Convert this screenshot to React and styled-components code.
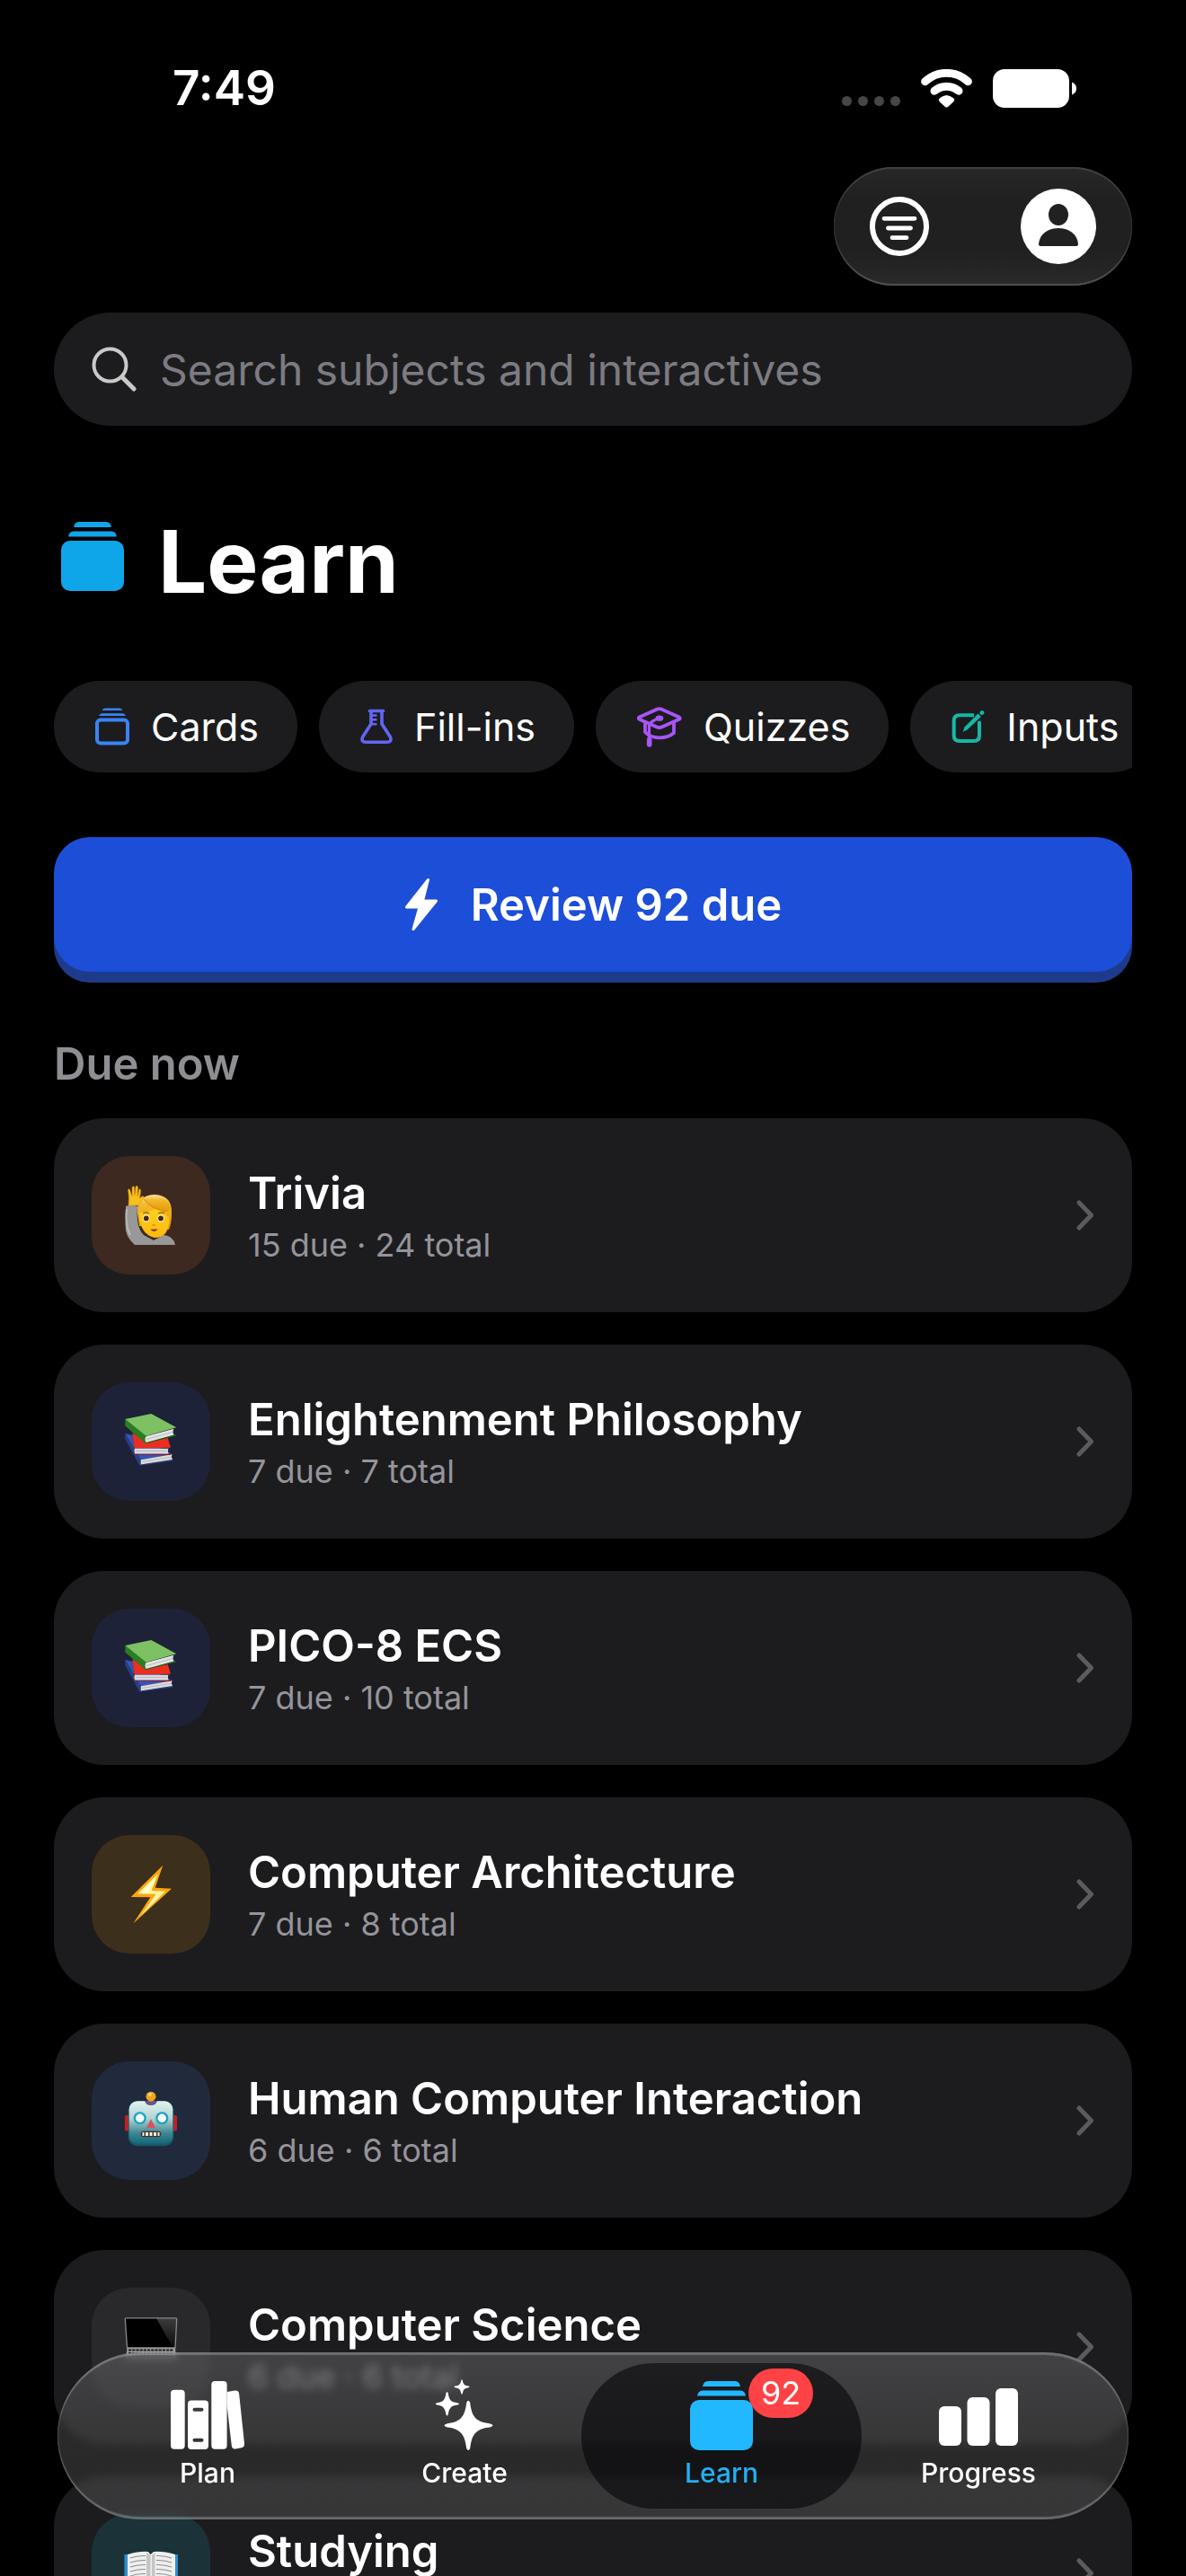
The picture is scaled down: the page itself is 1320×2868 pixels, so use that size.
import React, { useState } from "react";
import styled, { createGlobalStyle } from "styled-components";

const chips = [
  { name: "Cards", icon: <CardsOutlineIcon /> },
  { name: "Fill-ins", icon: <FlaskIcon /> },
  { name: "Quizzes", icon: <CapIcon /> },
  { name: "Inputs", icon: <EditIcon /> },
];

const decks = [
  { name: "Trivia", due: 15, total: 24, tint: "#3d291f", icon: <RaisedHand /> },
  { name: "Enlightenment Philosophy", due: 7, total: 7, tint: "#1e2239", icon: <Books /> },
  { name: "PICO-8 ECS", due: 7, total: 10, tint: "#1e2239", icon: <Books /> },
  { name: "Computer Architecture", due: 7, total: 8, tint: "#3c2f1b", icon: <Lightning /> },
  { name: "Human Computer Interaction", due: 6, total: 6, tint: "#202a3c", icon: <Robot /> },
  { name: "Computer Science", due: 6, total: 6, tint: "#29292b", icon: <Laptop /> },
  { name: "Studying", tint: "#1b3338", icon: <OpenBook /> },
];

const tabs = [
  { name: "Plan", icon: <ShelfIcon /> },
  { name: "Create", icon: <SparklesIcon /> },
  { name: "Learn", icon: <StackIcon width={72} height={78} />, badge: 92 },
  { name: "Progress", icon: <BarsIcon /> },
];

const App = () => {
  const [query, setQuery] = useState("");
  const [activeTab, setActiveTab] = useState("Learn");

  return (
    <Screen>
      <GlobalStyle />
      <StatusBar>
        <Time>7:49</Time>
        <StatusIcons>
          <SignalIcon />
          <WifiIcon />
          <BatteryIcon />
        </StatusIcons>
      </StatusBar>

      <Content>
        <Toolbar>
          <IconButton aria-label="Filter">
            <FilterIcon />
          </IconButton>
          <IconButton aria-label="Profile">
            <ProfileIcon />
          </IconButton>
        </Toolbar>

        <SearchBox>
          <SearchIcon />
          <SearchInput
            type="text"
            aria-label="Search subjects and interactives"
            placeholder="Search subjects and interactives"
            value={query}
            onChange={(e) => setQuery(e.target.value)}
          />
        </SearchBox>

        <TitleRow>
          <StackIcon color="#0ea5e9" />
          <Title>Learn</Title>
        </TitleRow>

        <Chips>
          {chips.map((chip) => (
            <Chip key={chip.name}>
              {chip.icon}
              {chip.name}
            </Chip>
          ))}
        </Chips>

        <ReviewButton>
          <BoltIcon />
          Review 92 due
        </ReviewButton>

        <SectionTitle>Due now</SectionTitle>
        <DeckList>
          {decks.map((deck) => (
            <li key={deck.name}>
              <Deck>
                <DeckTile $tint={deck.tint}>{deck.icon}</DeckTile>
                <DeckText>
                  <DeckName>{deck.name}</DeckName>
                  {deck.due && (
                    <DeckCount>
                      {deck.due} due · {deck.total} total
                    </DeckCount>
                  )}
                </DeckText>
                <Chevron />
              </Deck>
            </li>
          ))}
        </DeckList>
      </Content>

      <TabBar>
        {tabs.map((tab) => (
          <Tab
            key={tab.name}
            $active={tab.name === activeTab}
            onClick={() => setActiveTab(tab.name)}
          >
            <TabIcon>
              {tab.icon}
              {tab.badge && <Badge>{tab.badge}</Badge>}
            </TabIcon>
            <TabLabel>{tab.name}</TabLabel>
          </Tab>
        ))}
      </TabBar>
    </Screen>
  );
};

/* status bar icons */

function SignalIcon() {
  return (
    <svg width="65" height="43" viewBox="0 0 65 43" fill="#464646">
      <circle cx="5.5" cy="35.5" r="5.5" />
      <circle cx="23.5" cy="35.5" r="5.5" />
      <circle cx="41.5" cy="35.5" r="5.5" />
      <circle cx="59.5" cy="35.5" r="5.5" />
    </svg>
  );
}

function WifiIcon() {
  return (
    <svg width="57" height="43" viewBox="0 0 57 43" fill="none" stroke="#fff" strokeWidth="9" strokeLinecap="round">
      <path d="M4.6 13.8a35 35 0 0 1 47.8 0" />
      <path d="M15 24.2a20.5 20.5 0 0 1 27 0" />
      <path d="M20.6 32.6Q28.5 25.4 36.4 32.6Q38 34.4 36 36.4L30 42Q28.5 43.2 27 42L21 36.4Q19 34.4 20.6 32.6Z" fill="#fff" stroke="none" />
    </svg>
  );
}

function BatteryIcon() {
  return (
    <svg width="93" height="43" viewBox="0 0 93 43" fill="#fff">
      <rect width="85" height="43" rx="13" />
      <path d="M88 14.5Q93 16.5 93 21.5T88 28.5Z" />
    </svg>
  );
}

/* toolbar icons */

function FilterIcon() {
  return (
    <svg width="66" height="66" viewBox="0 0 66 66" fill="none" stroke="#fff" strokeLinecap="round">
      <circle cx="33" cy="33" r="30" strokeWidth="6" />
      <path d="M16 24.3h34M20.500 35h25M25 45.700h16" strokeWidth="4.8" />
    </svg>
  );
}

function ProfileIcon() {
  return (
    <svg width="84" height="84" viewBox="0 0 84 84">
      <circle cx="42" cy="42" r="42" fill="#fff" />
      <ellipse cx="42" cy="29" rx="11" ry="12" fill="#212121" />
      <path d="M22 64Q20 64 20 61.500C21 51 30 44 42 44s21 7 22 17.500Q64 64 62 64Z" fill="#212121" />
    </svg>
  );
}

function SearchIcon() {
  return (
    <svg width="50" height="50" viewBox="0 0 50 50" fill="none" stroke="#c9c9c9" strokeLinecap="round">
      <circle cx="20.500" cy="20.500" r="18" strokeWidth="4" />
      <path d="M34 34l13 13" strokeWidth="5" />
    </svg>
  );
}

/* stack of cards, used in the page title and in the tab bar */
function StackIcon({ color = "#22b8ff", width = 70, height = 88 }) {
  return (
    <svg width={width} height={height} viewBox={`0 0 70 ${height}`} fill={color}>
      <path d="M14 6Q15 0 20 0h30q5 0 6 6Z" />
      <path d="M8 16.500Q9 10.500 14 10.500h42q5 0 6 6Z" />
      <rect y="21" width="70" height="56" rx="10" />
    </svg>
  );
}

/* chip icons */

function CardsOutlineIcon() {
  return (
    <svg width="38" height="42" viewBox="0 0 38 42" fill="#3b82f6">
      <path d="M7.700 3Q8.500 .4 11 .4h16q2.500 0 3.300 2.600Z" />
      <path d="M4.200 9Q5 6.200 8 6.200h22q3 0 3.800 2.800Z" />
      <rect x="2" y="13.500" width="34" height="26" rx="4" fill="none" stroke="#3b82f6" strokeWidth="4" />
    </svg>
  );
}

function FlaskIcon() {
  return (
    <svg width="36" height="40" viewBox="0 0 36 40" fill="none" stroke="#6366f1" strokeWidth="3.600" strokeLinecap="round" strokeLinejoin="round">
      <path d="M10.500 2.500h15" />
      <path d="M12 3v14L2.600 31.500Q.5 37.200 6 37.200h24Q35.500 37.200 33.400 31.500L24 17V3" />
      <path d="M13 7.500h4.500M13 12.300h4.500M13 17.200h4.500" strokeWidth="2.400" />
    </svg>
  );
}

function CapIcon() {
  return (
    <svg width="50" height="45" viewBox="0 0 50 45" fill="none" stroke="#a855f7" strokeWidth="3.800" strokeLinecap="round" strokeLinejoin="round">
      <path d="M22 2.800Q24.700 1.600 27.500 2.800L47 11.600Q48.500 12.700 47 13.800L28 22.300Q24.700 23.700 21.500 22.300L2.500 13.800Q1 12.700 2.500 11.600Z" />
      <path d="M9 17.500V28q5.500 6.300 15.700 6.300T41 29V17.500" />
      <path d="M24 13q-7 2-10.500 6.500V35" strokeWidth="3.200" />
      <ellipse cx="25" cy="12.700" rx="2.500" ry="1.200" />
      <path d="M13.700 36.500V42" strokeWidth="5.600" />
    </svg>
  );
}

function EditIcon() {
  return (
    <svg width="37" height="37" viewBox="0 0 37 37" fill="none" stroke="#14b8a6" strokeWidth="4">
      <path d="M25 5.300H9Q2.700 5.300 2.700 11.500V28q0 6 6.300 6h16q6 0 6-6V12" />
      <path d="M12.700 23.700L14.500 18.500 29.500 3.600 32.800 6.900 17.500 21.500Z" fill="#14b8a6" stroke="none" />
      <path d="M33.800 2.700l.2-.2" strokeWidth="4.600" strokeLinecap="round" />
    </svg>
  );
}

function BoltIcon() {
  return (
    <svg width="38" height="60" viewBox="0 0 38 60" fill="#fff" stroke="#fff" strokeWidth="3" strokeLinejoin="round">
      <path d="M26.500 2.500L2.500 33h14.500L10 57.500 35.500 26H20.500Z" />
    </svg>
  );
}

function Chevron() {
  return (
    <svg width="20" height="34" viewBox="0 0 20 34" fill="none" stroke="#5b5b5f" strokeWidth="5" strokeLinecap="round" strokeLinejoin="round">
      <path d="M3 3l13.500 14L3 31" />
    </svg>
  );
}

/* tab icons */

function ShelfIcon() {
  return (
    <svg width="83" height="78" viewBox="0 0 83 78" fill="#fff">
      <rect y="9.700" width="15.700" height="66" rx="4" />
      <path fillRule="evenodd" d="M23 21.500h15q4 0 4 4v46.500q0 4-4 4H23q-4 0-4-4V25.500q0-4 4-4Zm3.500 8.300a2 2 0 0 0 0 4h8a2 2 0 0 0 0-4Zm0 34a2 2 0 0 0 0 4h8a2 2 0 0 0 0-4Z" />
      <rect x="45.300" y="0" width="17.300" height="75.700" rx="4" />
      <path d="M62.600 12l9-1.500q4-.5 4.500 3.500L82 69.500q.4 4-3.500 4.700l-6.500 1.200q-3.700.5-4.200-3.400L62.600 27Z" />
    </svg>
  );
}

function SparklesIcon() {
  return (
    <svg width="64" height="78" viewBox="0 2 64 78" fill="#fff" overflow="visible">
      <path d="M34.200 26Q36.200 21.500 38.200 26C40 41 44 47.500 60 49.200Q67 51.300 60 53.400C44 55 40 62 38.200 77Q36.200 81 34.200 77C32.500 62 28 55 13 53.400Q6 51.300 13 49.200C28 47.500 32.500 41 34.200 26Z" />
      <path d="M11.400 15.500Q12.600 12.500 13.800 15.500C14.800 23 17 25.500 24 26.200Q28 27.300 24 28.400C17 29.200 14.800 32 13.800 39Q12.600 42 11.400 39C10.400 32 8 29.200 1.500 28.400Q-2 27.300 1.500 26.200C8 25.500 10.400 23 11.400 15.500Z" />
      <path d="M28.200 1.500Q29 -1 29.900 1.500C30.500 5.500 32 7 36.500 7.600Q38.500 8.400 36.500 9.200C32 9.800 30.500 11.500 29.900 15.500Q29 18 28.200 15.500C27.500 11.500 26 9.800 21.500 9.200Q19.500 8.400 21.500 7.600C26 7 27.500 5.500 28.200 1.500Z" />
    </svg>
  );
}

function BarsIcon() {
  return (
    <svg width="88" height="78" viewBox="0 0 88 78" fill="#fff">
      <rect y="28" width="25" height="44" rx="6" />
      <rect x="31.500" y="18" width="25" height="54" rx="6" />
      <rect x="63" y="8" width="25" height="64" rx="6" />
    </svg>
  );
}

/* deck pictures */

function RaisedHand() {
  return (
    <svg width="60" height="66" viewBox="0 0 60 66">
      <defs>
        <linearGradient id="hair" x1="0" y1="0" x2="0" y2="1">
          <stop offset="0" stopColor="#fbe08e" />
          <stop offset=".3" stopColor="#f3b72c" />
          <stop offset="1" stopColor="#e39a08" />
        </linearGradient>
        <linearGradient id="skin" x1="0" y1="0" x2="0" y2="1">
          <stop offset="0" stopColor="#ffd21f" />
          <stop offset="1" stopColor="#fbb90f" />
        </linearGradient>
      </defs>
      <path d="M2 23Q8 20 15 23C14 37 15 48 22 55L33 61 44 55Q55 56 57 66H12Q1 57 1.500 43Z" fill="#989898" />
      <path d="M3 26Q1 44 7 55" fill="none" stroke="#b9b9b9" strokeWidth="2" />
      <path d="M15 31Q13 11 34 10Q54 11 53 31Q53 42 50 49L17 45Z" fill="url(#hair)" />
      <path d="M17 30Q30 30 37 24Q46 31 50 36Q51 58 34 58Q17 54 17 30Z" fill="url(#skin)" />
      <path d="M22 15Q30 28 48 29Q54 25 49 18Q42 9 29 11Z" fill="url(#hair)" />
      <path d="M22 15Q31 26 47 29" fill="none" stroke="#d58b10" strokeWidth="1" />
      <path d="M5 22Q6 13 4.500 5Q6 2 7 6L9 12 9 2Q10.500-.5 11.500 2L12 11 13 1Q15-1 15.500 2L15 12 17 4Q19 3 18.500 7L17.500 14Q22 10 22 13L16 22Z" fill="#f9bf1c" stroke="#d18a08" strokeWidth=".5" />
      <path d="M21 31q4-2 7 0M38 31q4-2 7 0" fill="none" stroke="#a86a0a" strokeWidth="1.300" />
      <ellipse cx="24.800" cy="36.500" rx="3.600" ry="3.900" fill="#fff" />
      <ellipse cx="41" cy="36.500" rx="3.600" ry="3.900" fill="#fff" />
      <circle cx="24.800" cy="36.500" r="2.900" fill="#4a2b10" />
      <circle cx="41" cy="36.500" r="2.900" fill="#4a2b10" />
      <path d="M31.500 43.500q1.800 1.300 3.500 0" fill="none" stroke="#d3870c" strokeWidth="1.300" />
      <path d="M29.500 48.500h8q-1.500 2.500-4 2.500t-4-2.500Z" fill="#8b3a10" />
    </svg>
  );
}

function Books() {
  return (
    <svg width="60" height="66" viewBox="0 0 60 66">
      <path d="M1.300 24L10 26 48 44 54 47.500 18.500 53.500Z" fill="#3853b4" />
      <path d="M1.300 24V30L17.300 59.700 54.500 54.500V53L18.500 58.700V53Z" fill="#263f86" />
      <path d="M18.700 53.300L53.500 47.300Q52 50 54 53L18.700 58.500Z" fill="#dcdcdc" />
      <path d="M20 55.500l33-5.300" stroke="#a9a9a9" strokeWidth=".7" />
      <path d="M9.300 23L25 34 48.700 29 52 39.700 11.500 40.500Z" fill="#ea2f20" />
      <path d="M9.300 23L11.500 40.500V47.500L52 48V46.700L13 47Z" fill="#a3130d" />
      <path d="M12 40.700H49.500Q48 43 49.500 46.500H12Q10.500 43 12 40.700Z" fill="#dcdcdc" />
      <path d="M13 43.500h35" stroke="#a9a9a9" strokeWidth=".7" />
      <path d="M1.300 8L24.700 26.300 24 35.300 1.300 15.500Z" fill="#2b7d22" />
      <path d="M24 35.300L58.700 26.300 55 24 24 33Z" fill="#1d6317" />
      <path d="M24.700 27L55.500 18.700Q53.500 22 55.500 25.500L24.500 34Q22.500 30 24.700 27Z" fill="#e3e3e3" />
      <path d="M25 30.500l29-8" stroke="#a9a9a9" strokeWidth=".7" />
      <path d="M1.300 8L30.300 2 58.300 17.300 24.700 26.800Z" fill="#7dc163" />
    </svg>
  );
}

function Lightning() {
  return (
    <svg width="60" height="66" viewBox="0 0 60 66">
      <path d="M43.300 .7L34.700 25.700 53 26.700 10.300 65.500 29.300 36.300 7.700 36Z" fill="#fda50f" />
      <path d="M38 10L30.500 29 46 29.700 18.500 57 35.500 32.700 15 32.500Z" fill="#fff6a0" />
      <path d="M34.500 16L26.500 30.500H20Z" fill="#fffde0" />
    </svg>
  );
}

function Robot() {
  return (
    <svg width="60" height="66" viewBox="0 0 60 66">
      <defs>
        <linearGradient id="robot" x1="0" y1="0" x2="0" y2="1">
          <stop offset="0" stopColor="#e2f3f0" />
          <stop offset=".4" stopColor="#b3d3d3" />
          <stop offset=".75" stopColor="#3d8794" />
          <stop offset="1" stopColor="#146878" />
        </linearGradient>
      </defs>
      <rect x="1" y="27" width="6" height="17.500" rx="2" fill="#c81e22" />
      <rect x="53" y="27" width="6" height="17.500" rx="2" fill="#c81e22" />
      <rect x="4.700" y="11.300" width="50.600" height="50" rx="10" fill="#155b68" />
      <rect x="5.700" y="11.300" width="48.600" height="47.500" rx="9" fill="url(#robot)" />
      <path d="M23 11h14q-1 5-7 5t-7-5Z" fill="#67558f" />
      <circle cx="30" cy="6.200" r="5.500" fill="#f6a31c" />
      <circle cx="29" cy="4" r="2" fill="#ffd36b" />
      <circle cx="17.700" cy="30.300" r="7" fill="#17a3c4" />
      <circle cx="42.300" cy="30.300" r="7" fill="#17a3c4" />
      <circle cx="17.700" cy="30.300" r="4.700" fill="#fff" />
      <circle cx="42.300" cy="30.300" r="4.700" fill="#fff" />
      <path d="M30 31.300L35 41.300H25Z" fill="#d9515a" />
      <rect x="18.700" y="44.700" width="22.600" height="6.600" rx="3.300" fill="#44302f" />
      <path d="M20.500 46h2v4h-2zM24 46h3v4h-3zM28.500 46h3v4h-3zM33 46h3v4h-3zM37.500 46h2v4h-2z" fill="#f5eede" />
    </svg>
  );
}

function Laptop() {
  return (
    <svg width="60" height="66" viewBox="0 0 60 66">
      <defs>
        <linearGradient id="glare" x1="0" y1="0" x2="0" y2="1">
          <stop offset="0" stopColor="#3c3c3e" />
          <stop offset="1" stopColor="#0c0c0d" />
        </linearGradient>
      </defs>
      <path d="M2.500 .8H57.500Q58.800 .8 58.700 2L57 34H3.500L1.300 2Q1.200 .8 2.500 .8Z" fill="#000" />
      <path d="M36 1H58.500L57 34H54.500Z" fill="url(#glare)" />
      <path d="M2.500 .8H57.500Q58.800 .8 58.700 2L57 34H3.500L1.300 2Q1.200 .8 2.500 .8Z" fill="none" stroke="#8a8a8d" strokeWidth="1.300" />
      <path d="M3.500 34H57L58 46H2Z" fill="#9a9a9c" />
      <path d="M5 36.500h50M5 40h50M4.500 43.500h51" stroke="#1c1c1e" strokeWidth="2" strokeDasharray="3.200 1" />
    </svg>
  );
}

function OpenBook() {
  return (
    <svg width="60" height="66" viewBox="0 0 60 66">
      <path d="M.5 12H60V57H.5Z" fill="#2e8fce" />
      <path d="M4 12Q18 8 27 9L29.500 12 33 9Q43 8 57 12V55Q42 50 30 55Q18 50 4 55Z" fill="#efefef" />
      <path d="M25 9.500L29.500 13V54L25 51ZM34.500 9.500L31 13V54L34.500 51Z" fill="#c5c5c7" />
      <path d="M7 16q8-3 17-2.500M7 21q8-3 17-2.500M7 26q8-3 17-2.500M7 31q8-3 17-2.500M7 36q8-3 17-2.500M7 41q8-3 17-2.500M36 13.500q9-.5 17 2.500M36 18.500q9-.5 17 2.500M36 23.500q9-.5 17 2.500M36 28.500q9-.5 17 2.500M36 33.500q9-.5 17 2.500M36 38.500q9-.5 17 2.500" fill="none" stroke="#8d8d90" strokeWidth="1.100" />
    </svg>
  );
}

const GlobalStyle = createGlobalStyle`
  * {
    box-sizing: border-box;
  }
  body {
    margin: 0;
    background-color: #000;
    color: #fff;
    font-family: Inter, "Liberation Sans", sans-serif;
  }
  button, input {
    font-family: inherit;
    color: inherit;
    border: none;
    padding: 0;
    margin: 0;
    background: none;
  }
  svg {
    display: block;
    flex-shrink: 0;
  }
`;
const Screen = styled.div`
  position: relative;
  height: 100vh;
  overflow: hidden;
`;
const StatusBar = styled.div`
  display: flex;
  justify-content: space-between;
  align-items: center;
  padding: 66px 122px 56px 192px;
`;
const Time = styled.div`
  font-size: 53px;
  font-weight: 600;
  line-height: 64px;
`;
const StatusIcons = styled.div`
  display: flex;
  align-items: center;
  gap: 23px;
`;
const Content = styled.main`
  padding: 0 60px;
`;
const Toolbar = styled.div`
  display: flex;
  align-items: center;
  justify-content: space-between;
  width: 332px;
  height: 132px;
  margin-left: auto;
  padding: 0 40px;
  border-radius: 66px;
  background: linear-gradient(#272727, #202020 30%, #202020 70%, #292929);
  box-shadow: inset 0 2px 1px #424242, inset 0 -2px 1px #525252,
    inset 0 0 2px #333;
`;
const IconButton = styled.button`
  border-radius: 50%;
`;
const SearchBox = styled.div`
  display: flex;
  align-items: center;
  gap: 26px;
  height: 126px;
  margin-top: 30px;
  padding: 0 42px;
  border-radius: 63px;
  background-color: #1c1c1e;
`;
const SearchInput = styled.input`
  flex: 1;
  min-width: 0;
  height: 64px;
  font-size: 48px;
  outline: none;

  &::placeholder {
    color: #7c7b82;
    opacity: 1;
  }
`;
const TitleRow = styled.div`
  display: flex;
  align-items: center;
  gap: 38px;
  margin: 91px 0 73px;
  padding: 0 8px;
`;
const Title = styled.h1`
  margin: 0;
  font-size: 96px;
  font-weight: 700;
  line-height: 120px;
`;
const Chips = styled.div`
  display: flex;
  gap: 24px;
  overflow: hidden;
`;
const Chip = styled.button`
  display: flex;
  flex-shrink: 0;
  align-items: center;
  gap: 24px;
  height: 102px;
  padding: 0 43px 0 46px;
  border-radius: 51px;
  background-color: #1c1c1e;
  font-size: 43px;
`;
const ReviewButton = styled.button`
  display: flex;
  align-items: center;
  justify-content: center;
  gap: 36px;
  width: 100%;
  height: 150px;
  margin-top: 72px;
  border-radius: 40px;
  background-color: #1d4ed8;
  box-shadow: 0 12px 0 #1e3a8a;
  font-size: 49px;
  font-weight: 600;
`;
const SectionTitle = styled.h2`
  margin: 73px 0 30px;
  color: #8e8e93;
  font-size: 49px;
  font-weight: 600;
  line-height: 60px;
`;
const DeckList = styled.ul`
  display: flex;
  flex-direction: column;
  gap: 36px;
  margin: 0;
  padding: 0;
  list-style: none;
`;
const Deck = styled.button`
  display: flex;
  align-items: center;
  width: 100%;
  padding: 42px;
  border-radius: 56px;
  background-color: #1c1c1e;
  text-align: left;
`;
const DeckTile = styled.span`
  display: flex;
  flex-shrink: 0;
  align-items: center;
  justify-content: center;
  width: 132px;
  height: 132px;
  border-radius: 42px;
  background-color: ${(props) => props.$tint};
`;
const DeckText = styled.span`
  display: flex;
  flex: 1;
  flex-direction: column;
  align-self: flex-start;
  gap: 2px;
  min-width: 0;
  padding: 10px 42px 0;
`;
const DeckName = styled.span`
  font-size: 49px;
  font-weight: 600;
  line-height: 64px;
`;
const DeckCount = styled.span`
  color: #95949b;
  font-size: 36px;
  line-height: 46px;
`;
const TabBar = styled.nav`
  position: absolute;
  right: 64px;
  bottom: 63px;
  left: 64px;
  display: flex;
  height: 186px;
  padding: 12px 24px;
  border-radius: 93px;
  background: linear-gradient(
    rgba(104, 104, 106, 0.5),
    rgba(84, 84, 85, 0.5) 45%,
    rgba(80, 80, 81, 0.5)
  );
  backdrop-filter: blur(5px);
  box-shadow: inset 0 3px 1px rgba(255, 255, 255, 0.22),
    inset 0 -3px 1px rgba(255, 255, 255, 0.22),
    inset 0 0 3px rgba(255, 255, 255, 0.2);
`;
const Tab = styled.button`
  display: flex;
  flex: 1;
  flex-direction: column;
  align-items: center;
  gap: 6px;
  margin: 0 -13px;
  padding: 20px 0;
  border-radius: 81px;
  background-color: ${(props) =>
    props.$active ? "rgba(2, 2, 6, 0.56)" : "transparent"};
  color: ${(props) => (props.$active ? "#22b0f2" : "#fff")};
`;
const TabIcon = styled.span`
  position: relative;
`;
const TabLabel = styled.span`
  font-size: 30px;
  font-weight: 500;
  line-height: 36px;
`;
const Badge = styled.span`
  position: absolute;
  top: -14px;
  left: 66px;
  min-width: 70px;
  padding: 0 14px;
  border-radius: 28px;
  background-color: #ff4245;
  color: #fff;
  font-size: 36px;
  line-height: 55px;
  text-align: center;
`;
export default App;
